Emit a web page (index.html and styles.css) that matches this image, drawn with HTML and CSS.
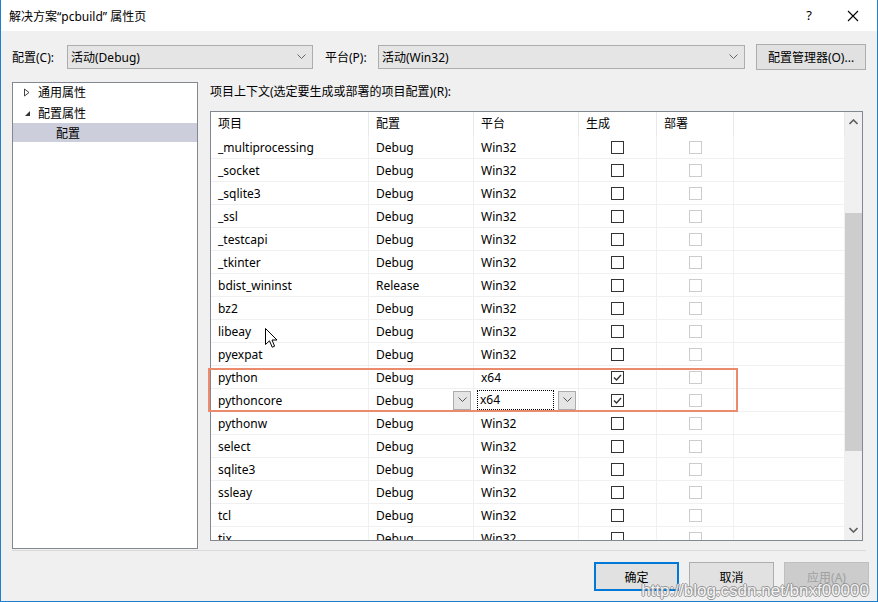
FILE: index.html
```html
<!DOCTYPE html>
<html lang="zh-CN">
<head>
    <meta charset="UTF-8">
    <title>解决方案“pcbuild” 属性页</title>
    <link rel="stylesheet" href="styles.css">
</head>
<body>
    <div class="window">
        <div class="titlebar">
            <span class="title">解决方案“pcbuild” 属性页</span>
            <span class="help">?</span>
            <svg class="close" width="12" height="12" viewBox="0 0 12 12"><path d="M1 1L11 11M11 1L1 11" stroke="#000" stroke-width="1.1"/></svg>
        </div>

        <div class="toolbar">
            <span class="label">配置(C):</span>
            <div class="combo combo-config">
                <span>活动(Debug)</span>
                <svg width="9" height="6" viewBox="0 0 9 6"><path d="M0.5 0.5L4.5 4.5L8.5 0.5" fill="none" stroke="#666"/></svg>
            </div>
            <span class="label label-platform">平台(P):</span>
            <div class="combo combo-platform">
                <span>活动(Win32)</span>
                <svg width="9" height="6" viewBox="0 0 9 6"><path d="M0.5 0.5L4.5 4.5L8.5 0.5" fill="none" stroke="#666"/></svg>
            </div>
            <button class="btn btn-manager">配置管理器(O)...</button>
        </div>

        <div class="main">
            <div class="tree">
                <div class="tree-item">
                    <svg class="arrow" width="8" height="9" viewBox="0 0 8 9"><path d="M1.5 1L6 4.5L1.5 8Z" fill="none" stroke="#444"/></svg>
                    通用属性
                </div>
                <div class="tree-item">
                    <svg class="arrow" width="8" height="9" viewBox="0 0 8 9"><path d="M7 2L7 7L2 7Z" fill="#333"/></svg>
                    配置属性
                </div>
                <div class="tree-item selected">配置</div>
            </div>

            <div class="pane">
                <div class="pane-label">项目上下文(选定要生成或部署的项目配置)(R):</div>
                <div class="grid-box">
                    <div class="grid">
                        <div class="row head">
                            <div class="cell">项目</div>
                            <div class="cell">配置</div>
                            <div class="cell">平台</div>
                            <div class="cell">生成</div>
                            <div class="cell">部署</div>
                            <div class="cell"></div>
                        </div>
                        <div id="rows"></div>
                    </div>
                    <div class="scrollbar">
                        <svg class="sb-arrow" width="9" height="6" viewBox="0 0 9 6"><path d="M0.5 5L4.5 1L8.5 5" fill="none" stroke="#606060" stroke-width="1.6"/></svg>
                        <div class="sb-track"><div class="sb-thumb"></div></div>
                        <svg class="sb-arrow" width="9" height="6" viewBox="0 0 9 6"><path d="M0.5 1L4.5 5L8.5 1" fill="none" stroke="#606060" stroke-width="1.6"/></svg>
                    </div>
                </div>
            </div>
        </div>

        <div class="separator"></div>

        <div class="footer">
            <button class="btn btn-ok">确定</button>
            <button class="btn">取消</button>
            <button class="btn btn-disabled">应用(A)</button>
        </div>

        <div class="highlight"></div>

        <svg class="cursor" width="13" height="21" viewBox="0 0 13 21">
            <path d="M0.5 0.5L0.5 16.5L4.5 12.8L7.2 19.2L9.6 18.2L7 12L12 12Z" fill="#fff" stroke="#000" stroke-width="1"/>
        </svg>

        <div class="watermark">http://blog.csdn.net/bnxf00000</div>
    </div>

    <script>
        const projects = [
            ['_multiprocessing', 'Debug', 'Win32', false],
            ['_socket', 'Debug', 'Win32', false],
            ['_sqlite3', 'Debug', 'Win32', false],
            ['_ssl', 'Debug', 'Win32', false],
            ['_testcapi', 'Debug', 'Win32', false],
            ['_tkinter', 'Debug', 'Win32', false],
            ['bdist_wininst', 'Release', 'Win32', false],
            ['bz2', 'Debug', 'Win32', false],
            ['libeay', 'Debug', 'Win32', false],
            ['pyexpat', 'Debug', 'Win32', false],
            ['python', 'Debug', 'x64', true],
            ['pythoncore', 'Debug', 'x64', true, true],
            ['pythonw', 'Debug', 'Win32', false],
            ['select', 'Debug', 'Win32', false],
            ['sqlite3', 'Debug', 'Win32', false],
            ['ssleay', 'Debug', 'Win32', false],
            ['tcl', 'Debug', 'Win32', false],
            ['tix', 'Debug', 'Win32', false]
        ];

        const chevron = '<svg width="9" height="6" viewBox="0 0 9 6"><path d="M0.5 0.5L4.5 4.5L8.5 0.5" fill="none" stroke="#555"/></svg>';
        const tick = '<svg width="11" height="11" viewBox="0 0 11 11"><path d="M2 5.5L4.5 8L9 3" fill="none" stroke="#333" stroke-width="1.4"/></svg>';

        const rows = document.getElementById('rows');
        projects.forEach(function(p) {
            const row = document.createElement('div');
            row.className = 'row';
            let config = p[1];
            let platform = p[2];
            if (p[4]) {
                config = '<span class="grow">' + p[1] + '</span><span class="drop">' + chevron + '</span>';
                platform = '<span class="focus">' + p[2] + '</span><span class="drop">' + chevron + '</span>';
            }
            row.innerHTML =
                '<div class="cell">' + p[0] + '</div>' +
                '<div class="cell' + (p[4] ? ' editing' : '') + '">' + config + '</div>' +
                '<div class="cell' + (p[4] ? ' editing' : '') + '">' + platform + '</div>' +
                '<div class="cell center"><span class="check">' + (p[3] ? tick : '') + '</span></div>' +
                '<div class="cell center"><span class="check off"></span></div>' +
                '<div class="cell"></div>';
            rows.appendChild(row);
        });
    </script>
</body>
</html>
```

FILE: styles.css
```css
body {
    margin: 0;
    font-family: "Noto Sans", "Noto Sans CJK SC", sans-serif;
    font-size: 12px;
    color: #000;
}

.window {
    position: relative;
    width: 878px;
    height: 602px;
    box-sizing: border-box;
    border: 1px solid #1c7fd0;
    border-top: none;
    background-color: #f0f0f0;
    overflow: hidden;
}

.titlebar {
    height: 31px;
    background-color: #fff;
    display: flex;
    align-items: center;
    padding-left: 8px;
}

.title {
    flex: 1;
    font-size: 12px;
}

.help {
    font-size: 13px;
    margin-right: 35px;
    margin-bottom: 2px;
}

.close {
    margin-right: 18px;
}

.toolbar {
    display: flex;
    align-items: center;
    margin-top: 13px;
    padding-left: 11px;
    height: 26px;
}

.label {
    width: 55px;
}

.label-platform {
    width: 53px;
    margin-left: 12px;
}

.combo {
    height: 24px;
    box-sizing: border-box;
    border: 1px solid #adadad;
    background-color: #e5e5e5;
    display: flex;
    align-items: center;
    justify-content: space-between;
    padding: 0 6px 0 3px;
}

.combo-config {
    width: 246px;
}

.combo-platform {
    width: 367px;
}

.btn {
    font-family: "Noto Sans", "Noto Sans CJK SC", sans-serif;
    font-size: 12px;
    color: #000;
    background-color: #e1e1e1;
    border: 1px solid #adadad;
    padding: 0;
    box-sizing: border-box;
}

.btn-manager {
    margin-left: 11px;
    width: 110px;
    height: 26px;
}

.main {
    display: flex;
    margin-top: 12px;
    padding-left: 11px;
}

.tree {
    width: 186px;
    height: 467px;
    box-sizing: border-box;
    border: 1px solid #828790;
    background-color: #fff;
    padding-top: 0;
}

.tree-item {
    height: 20px;
    display: flex;
    align-items: center;
    padding-left: 10px;
}

.tree-item:first-child {
    height: 18px;
    padding-bottom: 2px;
}

.tree-item .arrow {
    margin-right: 7px;
}

.tree-item.selected {
    height: 19px;
    background-color: #cccedb;
    padding-left: 43px;
}

.pane {
    margin-left: 12px;
    width: 653px;
}

.pane-label {
    height: 20px;
    line-height: 20px;
}

.grid-box {
    margin-top: 9px;
    height: 430px;
    box-sizing: border-box;
    border: 1px solid #828790;
    background-color: #fff;
    display: flex;
}

.grid {
    flex: 1;
    overflow: hidden;
}

.row {
    display: grid;
    grid-template-columns: 158px 105px 105px 78px 77px 1fr;
    height: 23px;
}

.row.head {
    height: 24px;
}

.cell {
    display: flex;
    align-items: center;
    padding-left: 7px;
    border-right: 1px solid #f0f0f0;
    border-bottom: 1px solid #f0f0f0;
    white-space: nowrap;
}

.head .cell {
    border-bottom: none;
    border-right-color: #e8e8e8;
    padding-bottom: 2px;
}

.cell.center {
    justify-content: center;
    padding-left: 0;
}

.cell.editing {
    padding-left: 3px;
    padding-right: 2px;
}

.grow {
    flex: 1;
    padding-left: 4px;
}

.focus {
    width: 74px;
    height: 18px;
    line-height: 18px;
    border: 1px dotted #000;
    padding-left: 2px;
    margin-right: 4px;
}

.drop {
    width: 18px;
    height: 19px;
    box-sizing: border-box;
    border: 1px solid #acacac;
    background-color: #e5e5e5;
    display: flex;
    align-items: center;
    justify-content: center;
}

.check {
    width: 13px;
    height: 13px;
    box-sizing: border-box;
    border: 1px solid #333;
    background-color: #fff;
    display: flex;
    align-items: center;
    justify-content: center;
}

.check.off {
    border-color: #cccccc;
}

.scrollbar {
    width: 17px;
    background-color: #f0f0f0;
    display: flex;
    flex-direction: column;
    align-items: center;
}

.sb-arrow {
    margin: 7px 0;
}

.sb-track {
    flex: 1;
    width: 100%;
    padding-top: 81px;
}

.sb-thumb {
    height: 238px;
    background-color: #cdcdcd;
}

.separator {
    margin: 1px 11px 0 11px;
    height: 1px;
    background-color: #dadada;
}

.footer {
    display: flex;
    justify-content: flex-end;
    gap: 10px;
    padding-right: 8px;
    margin-top: 11px;
}

.footer .btn {
    width: 85px;
    height: 29px;
}

.btn-ok {
    border: 2px solid #0078d7;
}

.btn-disabled {
    color: #a0a0a0;
    background-color: #cccccc;
    border-color: #bfbfbf;
}

.highlight {
    position: absolute;
    left: 207px;
    top: 368px;
    width: 530px;
    height: 44px;
    box-sizing: border-box;
    border: 2px solid #ec8a6e;
}

.cursor {
    position: absolute;
    left: 264px;
    top: 328px;
}

.watermark {
    position: absolute;
    right: 8px;
    bottom: 0;
    font-family: "Liberation Sans", sans-serif;
    font-size: 17px;
    color: #f8f8f8;
    text-shadow: -1px 0 0 #8a8a8a, 1px 0 0 #8a8a8a, 0 -1px 0 #8a8a8a, 0 1px 0 #8a8a8a;
    opacity: 0.85;
}
```
